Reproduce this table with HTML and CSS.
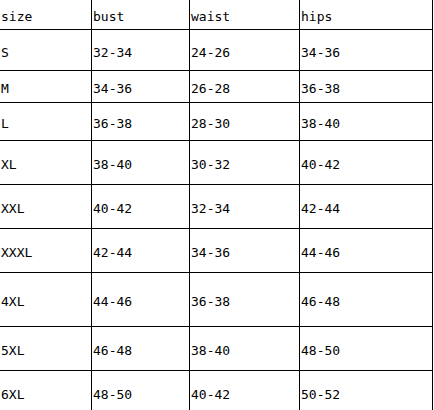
FILE: index.html
```html
<!DOCTYPE html>
<html>
<head>
<meta charset="utf-8">
<link rel="stylesheet" href="styles.css">
</head>
<body>
<div class="chart">
  <div class="cell">size</div><div class="cell">bust</div><div class="cell">waist</div><div class="cell">hips</div>
  <div class="cell">S</div><div class="cell">32-34</div><div class="cell">24-26</div><div class="cell">34-36</div>
  <div class="cell">M</div><div class="cell">34-36</div><div class="cell">26-28</div><div class="cell">36-38</div>
  <div class="cell">L</div><div class="cell">36-38</div><div class="cell">28-30</div><div class="cell">38-40</div>
  <div class="cell">XL</div><div class="cell">38-40</div><div class="cell">30-32</div><div class="cell">40-42</div>
  <div class="cell">XXL</div><div class="cell">40-42</div><div class="cell">32-34</div><div class="cell">42-44</div>
  <div class="cell">XXXL</div><div class="cell">42-44</div><div class="cell">34-36</div><div class="cell">44-46</div>
  <div class="cell">4XL</div><div class="cell">44-46</div><div class="cell">36-38</div><div class="cell">46-48</div>
  <div class="cell">5XL</div><div class="cell">46-48</div><div class="cell">38-40</div><div class="cell">48-50</div>
  <div class="cell">6XL</div><div class="cell">48-50</div><div class="cell">40-42</div><div class="cell">50-52</div>
</div>
</body>
</html>
```
FILE: styles.css
```css
html, body {
  margin: 0;
  padding: 0;
  background: #fff;
  overflow: hidden;
}
.chart {
  display: grid;
  grid-template-columns: 91px 97px 109px 132px;
  grid-template-rows: 29px 40px 31px 37px 43px 43px 43px 53px 43px 42px;
  gap: 1px;
  width: 433px;
  box-sizing: border-box;
  padding-right: 1px;
  background: #000;
  font-family: "DejaVu Sans Mono", monospace;
  font-size: 13px;
  color: #000;
}
.cell {
  background: #fff;
  display: flex;
  align-items: center;
  padding: 4px 0 0 1px;
  box-sizing: border-box;
  white-space: nowrap;
}
```
